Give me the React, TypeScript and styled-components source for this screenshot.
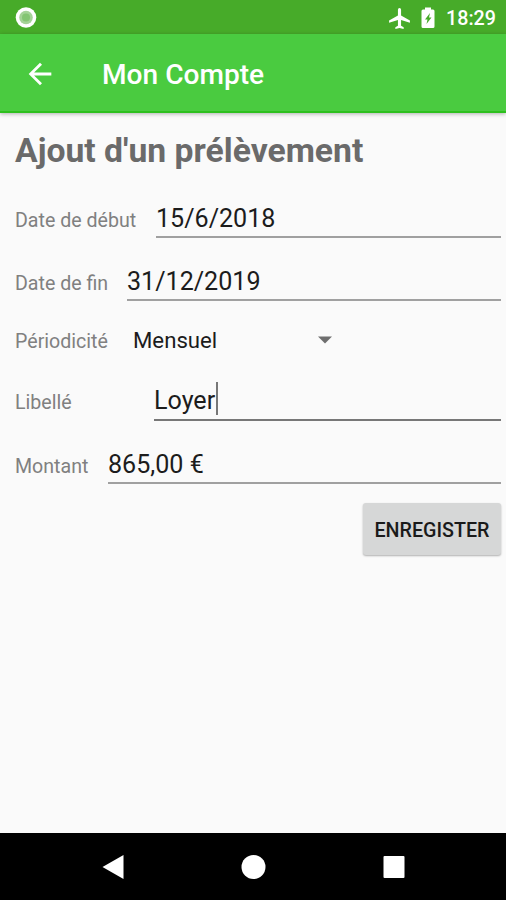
import React from "react";
import styled, { createGlobalStyle } from "styled-components";

const GlobalStyle = createGlobalStyle`
  * { box-sizing: border-box; }
  body { margin: 0; background: #fafafa; }
`;

const Screen = styled.div`
  width: 506px;
  height: 900px;
  display: flex;
  flex-direction: column;
  overflow: hidden;
  background: #fafafa;
  font-family: Roboto, "Liberation Sans", sans-serif;
`;

const StatusBar = styled.header`
  height: 34px;
  flex: none;
  display: flex;
  align-items: center;
  padding: 2px 10px 0 15px;
  background: #47ab29;
  color: #fff;
`;

const StatusIcons = styled.div`
  margin-left: auto;
  display: flex;
  align-items: center;
`;

const PlaneIcon = styled.svg`
  width: 25px;
  height: 25px;
  margin-right: 9px;
`;

const BatteryIcon = styled.svg`
  width: 14px;
  height: 22px;
  margin-right: 11px;
`;

const Clock = styled.span`
  width: 50px;
  padding-top: 2px;
  font-size: 19.7px;
  font-weight: 500;
  line-height: 24px;
  white-space: nowrap;
`;

const AppBar = styled.div`
  height: 79px;
  flex: none;
  display: flex;
  align-items: center;
  padding: 2px 0 0 23px;
  background: #4acb40;
  border-bottom: 2px solid #2dc01e;
  box-shadow: 0 1px 4px rgba(0, 0, 0, 0.3);
  color: #fff;
`;

const BackIcon = styled.svg`
  width: 34px;
  height: 34px;
  margin-right: 45px;
`;

const AppTitle = styled.h1`
  margin: 0;
  padding-top: 2px;
  font-size: 28.1px;
  font-weight: 500;
  line-height: 34px;
`;

const Form = styled.main`
  flex: 1;
  display: flex;
  flex-direction: column;
  padding: 18px 5px 0 15px;
`;

const Heading = styled.h2`
  margin: 0;
  height: 63px;
  font-size: 33.7px;
  font-weight: 700;
  line-height: 40px;
  color: #6a6a6a;
  white-space: nowrap;
`;

const Row = styled.div<{ $height: number }>`
  height: ${(p) => p.$height}px;
  display: flex;
  align-items: flex-start;
`;

const Label = styled.label<{ $width: number; $raised?: boolean }>`
  flex: none;
  width: ${(p) => p.$width}px;
  padding-top: ${(p) => (p.$raised ? 2 : 4)}px;
  font-size: 19.6px;
  line-height: 45px;
  height: 44px;
  color: #808080;
  white-space: nowrap;
`;

const Field = styled.div<{ $focused?: boolean }>`
  flex: 1;
  height: ${(p) => (p.$focused ? 45 : 44)}px;
  display: flex;
  align-items: flex-start;
  border-bottom: ${(p) => (p.$focused ? "2.8px solid #777" : "2px solid #a0a0a0")};
  font-size: 25.1px;
  line-height: 49px;
  color: #1c1c1c;
  white-space: nowrap;
`;

const Caret = styled.span`
  width: 2px;
  height: 33px;
  margin: 6px 0 0 1px;
  background: #777;
`;

const Select = styled.div`
  width: 207px;
  height: 46px;
  display: flex;
  align-items: center;
  justify-content: space-between;
  padding: 0 4px 0 4px;
  font-size: 22.2px;
  line-height: 46px;
  color: #1c1c1c;
`;

const DropArrow = styled.svg`
  width: 14px;
  height: 8px;
`;

const SaveButton = styled.button`
  align-self: flex-end;
  width: 138px;
  height: 52px;
  padding: 3px 0 0;
  border: 0;
  border-radius: 3px;
  background: #d6d7d7;
  box-shadow: 0 1px 2px rgba(0, 0, 0, 0.3);
  font-family: inherit;
  font-size: 19.7px;
  font-weight: 500;
  line-height: 49px;
  color: #1a1a1a;
`;

const NavBar = styled.nav`
  height: 67px;
  flex: none;
  display: flex;
  justify-content: space-between;
  align-items: center;
  padding: 0 100px;
  background: #000;
`;

const NavIcon = styled.svg`
  width: 26px;
  height: 26px;
`;

export default function App() {
  return (
    <Screen>
      <GlobalStyle />
      <StatusBar>
        <svg width="22" height="22" viewBox="0 0 22 22">
          <circle cx="11" cy="10.5" r="10.3" fill="#fff" />
          <circle cx="11" cy="10.5" r="6.8" fill="#a4d397" />
          <circle cx="11" cy="10.5" r="4" fill="#84c573" />
        </svg>
        <StatusIcons>
          <PlaneIcon viewBox="0 0 24 24" fill="#fff">
            <path d="M22 16v-2l-8.500-5V3.500a1.500 1.500 0 0 0-3 0V9L2 14v2l8.500-2.500V19L8 20.500V22l4-1 4 1v-1.500L13.500 19v-5.500z" />
          </PlaneIcon>
          <BatteryIcon viewBox="0 0 14 22" fill="#fff">
            <path
              fillRule="evenodd"
              d="M4 .5h6v2h2q1.500 0 1.500 1.500v15.500q0 1.500-1.500 1.500H2q-1.500 0-1.500-1.500V4q0-1.500 1.500-1.500h2zM9 6l-5 6.500h2.500L5.500 17l5-6.500H8z"
            />
          </BatteryIcon>
          <Clock>18:29</Clock>
        </StatusIcons>
      </StatusBar>
      <AppBar>
        <BackIcon viewBox="0 0 24 24" fill="#fff">
          <path d="M20 11H7.830l5.590-5.590L12 4l-8 8 8 8 1.410-1.410L7.830 13H20z" />
        </BackIcon>
        <AppTitle>Mon Compte</AppTitle>
      </AppBar>
      <Form>
        <Heading>Ajout d'un prélèvement</Heading>
        <Row $height={63}>
          <Label $width={141}>Date de début</Label>
          <Field>15/6/2018</Field>
        </Row>
        <Row $height={60}>
          <Label $width={112}>Date de fin</Label>
          <Field>31/12/2019</Field>
        </Row>
        <Row $height={59}>
          <Label $width={114} $raised>
            Périodicité
          </Label>
          <Select>
            Mensuel
            <DropArrow viewBox="0 0 14 8">
              <path d="M0 .5h14l-7 7z" fill="#6e6e6e" />
            </DropArrow>
          </Select>
        </Row>
        <Row $height={64}>
          <Label $width={139}>Libellé</Label>
          <Field $focused>
            Loyer
            <Caret />
          </Field>
        </Row>
        <Row $height={63}>
          <Label $width={93}>Montant</Label>
          <Field>865,00 €</Field>
        </Row>
        <SaveButton>ENREGISTER</SaveButton>
      </Form>
      <NavBar>
        <NavIcon viewBox="0 0 26 26">
          <path d="M23.500 1v24L2.500 13z" fill="#fff" />
        </NavIcon>
        <NavIcon viewBox="0 0 26 26">
          <circle cx="13.500" cy="13" r="12" fill="#fff" />
        </NavIcon>
        <NavIcon viewBox="0 0 26 26">
          <rect x="3.500" y="2" width="21" height="22" rx="1" fill="#fff" />
        </NavIcon>
      </NavBar>
    </Screen>
  );
}
